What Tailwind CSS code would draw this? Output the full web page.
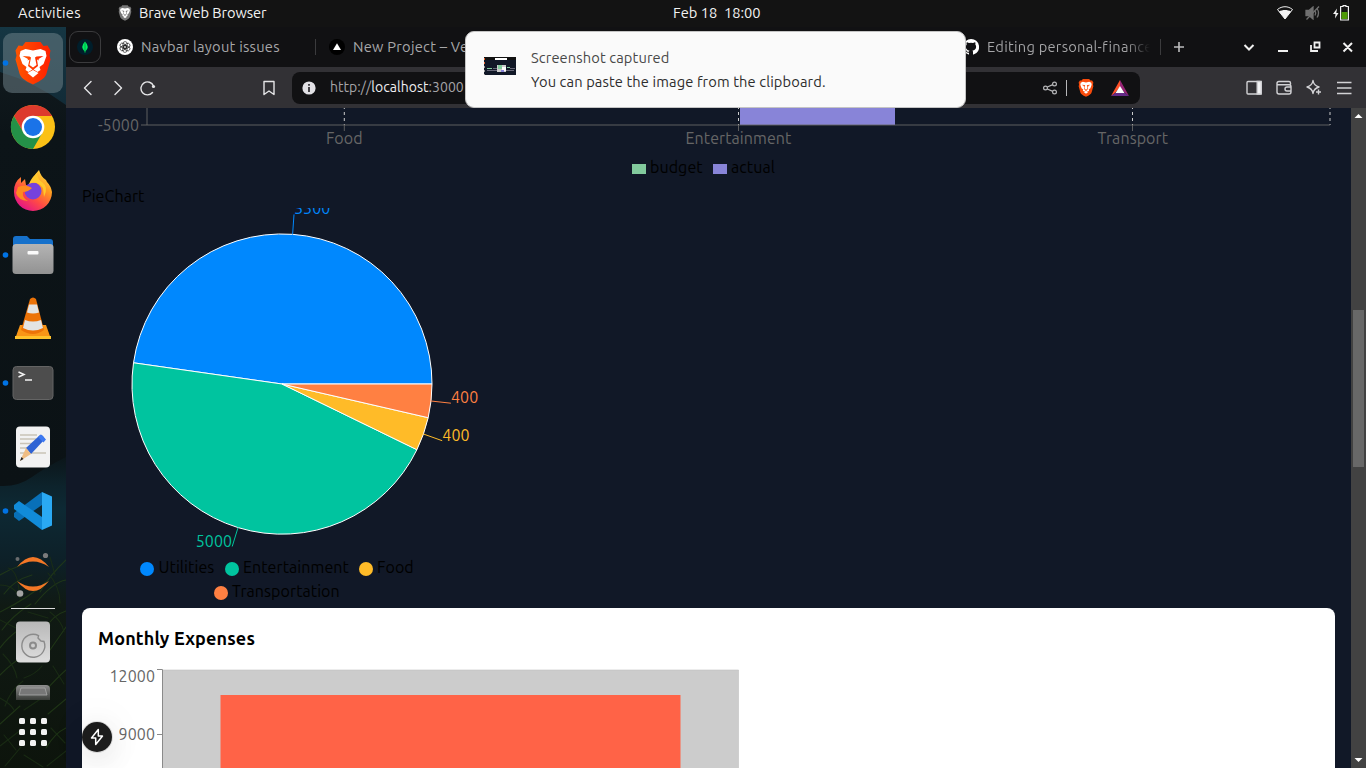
<!DOCTYPE html>
<html lang="en">
<head>
<meta charset="utf-8">
<title>Personal finance</title>
<script src="https://cdn.jsdelivr.net/npm/@tailwindcss/browser@4"></script>
</head>
<body class="relative flex h-[768px] w-[1366px] flex-col overflow-hidden bg-[#111827] font-['Ubuntu','Noto_Sans',sans-serif]">
<svg class="hidden">
  <defs>
    <symbol id="lion" viewBox="0 0 37 44">
      <path d="M11 1h15l3 4 4-.5 3 5-1 5 1 4-4 14c-1 4-5 7-13.500 11C10 39.500 6 36.500 5 32.500L1 18.500l1-4-1-5 3-5L8 5z"/>
      <path fill="#fff" d="M6 10l5-2 7.500 1.500L26 8l5 2 1 5-3 8-4 3 1 3-3 2-4.500-3-4.500 3-3-2 1-3-4-3-3-8z"/>
      <path fill="#fff" d="M18.500 29l5.500 3-5.500 4.500L13 32z"/>
      <path d="M8 15l7 .5 1.500 1L15 24l3.500 2.500L22 24l-1.500-7.500 1.500-1 7-.5-5 3 .5 1.500-2-1L23.500 25l-5 4-5-4L15 18.500l-2 1 .5-1.500z"/>
    </symbol>
  </defs>
</svg>

<header class="relative h-[27px] shrink-0 bg-[#131313] text-[14.670px] leading-[26px] text-[#f2f2f2]">
  <div class="flex h-[26px] items-center pl-[18px]">
    <span class="w-[100px] tracking-[0.27px]">Activities</span>
    <svg class="h-[16px] w-[14px] fill-[#777]" viewBox="0 0 37 44"><use href="#lion"/></svg>
    <span class="ml-[7px] tracking-[-0.1px]">Brave Web Browser</span>
    <span class="ml-auto mr-[17px] flex items-center gap-[12px]">
      <svg width="16" height="14" viewBox="0 0 16 14"><path d="M.5 3.500C5-.2 11-.2 15.500 3.500L8 13z" fill="none" stroke="#f2f2f2"/><path d="M2 5.500c3.500-2 8.500-2 12 0L8 13z" fill="#f2f2f2"/></svg>
      <svg width="16" height="14" viewBox="0 0 16 14" fill="none" stroke="#707070" stroke-width="1.300"><path d="M1 4.500h3l4-3.500v12L4 9.500H1z" fill="#707070"/><path d="M10 4.500q1.500 2.500 0 5M12 2.500q3 4.500 0 9M1.500 13.500L14 .5"/></svg>
      <svg width="16" height="16" viewBox="0 0 16 16"><path d="M7.600 1.500h2.400V.6h3v.9h2.400v13.500H7.600z" fill="none" stroke="#f2f2f2" stroke-width="1.200" stroke-linejoin="round"/><path fill="#4e9a06" d="M8.500 7h6v7h-6z"/><path fill="#f2f2f2" d="M4 3.500L0 9h2.500L2 13.500 5.500 8H3.300z"/></svg>
    </span>
  </div>
  <span class="absolute left-[673px] top-0 whitespace-pre">Feb 18  18:00</span>
</header>

<div class="flex min-h-0 flex-1">
  <aside class="relative w-[66px] shrink-0 overflow-hidden bg-[#0c1318]">
    <svg width="66" height="741" viewBox="0 27 66 741">
      <defs>
        <linearGradient id="wall" x2="0" y2="1"><stop offset="0" stop-color="#153643"/><stop offset=".1" stop-color="#122c38"/><stop offset=".2" stop-color="#0c1418"/><stop offset=".57" stop-color="#0b1215"/><stop offset=".62" stop-color="#0d232c"/><stop offset=".65" stop-color="#0d2934"/><stop offset=".72" stop-color="#0d2028"/><stop offset=".78" stop-color="#101a14"/><stop offset="1" stop-color="#0d140c"/></linearGradient>
        <linearGradient id="hill" x2="0" y2="1"><stop stop-color="#10191d"/><stop offset=".15" stop-color="#0c1418"/><stop offset="1" stop-color="#0b1215"/></linearGradient>
        <linearGradient id="brave" x2="1"><stop stop-color="#ff5500"/><stop offset="1" stop-color="#ff2000"/></linearGradient>
        <linearGradient id="steel" x2="0" y2="1"><stop stop-color="#b4b4b4"/><stop offset="1" stop-color="#929292"/></linearGradient>
        <linearGradient id="disk" x2="0" y2="1"><stop stop-color="#b8b8b8"/><stop offset="1" stop-color="#dedede"/></linearGradient>
        <linearGradient id="fox" x1="1" y1="0" x2=".3" y2="1"><stop stop-color="#fff44f"/><stop offset=".4" stop-color="#ff9a20"/><stop offset=".7" stop-color="#ff4a45"/><stop offset="1" stop-color="#e31587"/></linearGradient>
        <linearGradient id="drive" x2="0" y2="1"><stop stop-color="#8e8e8e"/><stop offset="1" stop-color="#3a3d39"/></linearGradient>
      </defs>
      <path fill="url(#wall)" d="M0 27h66v741H0z"/>
      <path fill="url(#hill)" d="M0 72q35 10 66 33v352q-20 10-34 20T0 486z"/>
      <g fill="none" stroke-width="1.100" stroke-linecap="round">
        <path stroke="#233c18" stroke-opacity=".8" d="M0 575q10-6 22-10M4 594q10-14 28-19M0 612q30-15 46-30M35 604q18-22 31-24M40 592q10-17 26-32M2 630q10-14 29-26M0 648q8-11 20-19M45 629q8-14 21-18M50 650l16-23M0 675q14-14 22-17M46 690q13-14 20-20M0 724l20-18M48 714l18-15M46 748q9-15 20-20"/>
        <path stroke="#1c3015" stroke-opacity=".8" d="M8 568q9 2 11 22M0 585q14 0 20 13M48 573q12 14 12 30M0 620l16 8M50 612q12 9 14 20M3 654q12 12 14 24M53 666l11 18M0 698q11 6 14 12M51 728l14 15M4 735l12 15M24 755l19 12M5 706q5-15 18-25M0 746l22-17M5 766l16-19M47 766l19-15M24 678q12-4 18-12M24 710l18-12M55 575l-5-18M28 612l20 6"/>
      </g>
      <rect x="3" y="33" width="60" height="60" rx="9" fill="#70828a" fill-opacity=".53"/>
      <g fill="#0073e5"><circle cx="5.500" cy="63" r="2.800"/><circle cx="5.500" cy="255" r="2.800"/><circle cx="5.500" cy="383" r="2.800"/><circle cx="5.500" cy="511" r="2.800"/></g>
      <g fill="url(#brave)"><use href="#lion" x="14.500" y="41" width="37" height="44"/></g>

      <circle cx="33" cy="127" r="22" fill="#fbc116"/>
      <path d="M13.900 116A22 22 0 0 1 52.100 116H33L23.500 132.500z" fill="#dd3a2d"/>
      <path d="M13.900 116A22 22 0 0 0 33 149l9.500-16.500h-19z" fill="#249148"/>
      <circle cx="33" cy="127" r="11.300" fill="#fff"/><circle cx="33" cy="127" r="9" fill="#1a73e8"/>

      <path d="M14 191q0-9 7-14v6l4-4 1 6h6q0-8 7-15 2 7 7 10l1 2q4 4 5 10a19 19 0 0 1-38 0z" fill="url(#fox)"/>
      <circle cx="33" cy="191" r="8.500" fill="#7542dc"/>
      <path d="M18 187q8-3 14 1-4 4-9 4-1 6 5 9-10-1-12-8z" fill="#ff8b1e"/><path d="M29 184q8-4 14 4l1 9q5-10-2-15-4-2-5-9-6 5-8 11z" fill="#ffc82d"/>

      <path d="M13 239q0-3 3-3h11l3 3h20q3 0 3 3v10H13z" fill="#1671cb"/>
      <rect x="12.500" y="244" width="41" height="30" rx="3.500" fill="url(#steel)"/><rect x="27.500" y="251" width="11" height="3.500" rx="1" fill="#fafafa"/>

      <path d="M20 325h26l5 14H15z" fill="#f99516"/><path d="M15 336h36v3H15z" fill="#ffc12a"/>
      <path d="M30 299q3-3 6 0l8 31q-11 8-23 0z" fill="#ec7308"/><path d="M29 304.500h8l2 8q-6 2-12 0zM25 320q8 3 16 0l2 8q-10 5-20 0z" fill="#e3e4e4"/>

      <rect x="13" y="366.500" width="40" height="33" rx="3.500" fill="#4d4d4d" stroke="#646464"/><path d="M18.500 372l5.500 2.500-5.500 2.500M25 380h7" fill="none" stroke="#f2f2f2" stroke-width="1.500"/>

      <rect x="16" y="426.500" width="34" height="41" rx="4" fill="#f2f2f2"/>
      <path d="M20 435h17M20 439h16M20 443.500h13M20 448h9M20 453h26" stroke="#c9c3b7" stroke-width="1.600"/>
      <path d="M26 448L40 435q2-1 5 4L31 454z" fill="#2f63d4"/><path d="M38 437l3-2.500 5 5-2.500 3z" fill="#3d79f2"/><path d="M26 448l5 6-11 7z" fill="#efbd84"/><path d="M21.500 457l2 2-3.500 2z" fill="#222"/>

      <path d="M42 492v13L19 521l-5-4v-4z" fill="#0870b8"/><path d="M42 530v-13L19 501l-5 4v4z" fill="#118bd9"/><path d="M42 492l10 4.500v29L42 530z" fill="#2aa9f3"/>

      <path d="M17 567q16-20 32 0-16-11-32 0zM17 581q16 20 32 0-16 11-32 0z" fill="#f37726"/><circle cx="17.500" cy="559" r="2" fill="#6a6c6e"/><circle cx="45.500" cy="555.500" r="2.600" fill="#7a7b7c"/><circle cx="20" cy="593.500" r="3.300" fill="#a5a5a5"/>
      <path d="M11 608.500h44" stroke="#ddd"/>

      <rect x="16" y="621.500" width="34" height="41" rx="4" fill="url(#disk)"/><g fill="none" stroke="#8b8b8b" stroke-width="1.400"><path d="M38.500 635.500a11.500 11.500 0 1 0 5.500 6l-3-.5-3-3z"/><circle cx="33" cy="645.500" r="3" stroke-width="2"/></g>
      <path d="M16 700v-11q0-4 4-4h26q4 0 4 4v11z" fill="url(#drive)"/><path d="M21 688h24l2 7H19z" fill="#777" stroke="#aaa" stroke-width=".8"/>
      <g fill="#f2f2f2"><rect x="19" y="718" width="6" height="6" rx="1.500"/><rect x="30" y="718" width="6" height="6" rx="1.500"/><rect x="41" y="718" width="6" height="6" rx="1.500"/><rect x="19" y="729" width="6" height="6" rx="1.500"/><rect x="30" y="729" width="6" height="6" rx="1.500"/><rect x="41" y="729" width="6" height="6" rx="1.500"/><rect x="19" y="740" width="6" height="6" rx="1.500"/><rect x="30" y="740" width="6" height="6" rx="1.500"/><rect x="41" y="740" width="6" height="6" rx="1.500"/></g>
    </svg>
  </aside>

  <section class="flex w-[1300px] flex-col">
    <nav class="flex h-[40px] shrink-0 items-center bg-[#111113] text-[14.670px] tracking-[0.25px] text-[#a7a7a9]">
      <div class="ml-[3px] flex h-8 w-8 items-center justify-center rounded-[9px] border border-[#3b3b3d]">
        <svg width="16" height="16" viewBox="0 0 16 16"><circle cx="8" cy="8" r="8" fill="#001e2b"/><path d="M8 2.500q5.500 5.500 0 10.500Q2.500 8 8 2.500z" fill="#00ed64"/><path d="M8 3v11" stroke="#009a43" stroke-width=".8"/></svg>
      </div>
      <svg class="ml-[16px]" width="16" height="16" viewBox="0 0 16 16"><circle cx="8" cy="8" r="8" fill="#fff"/><g fill="none" stroke="#222" stroke-width=".7"><rect x="6" y="2.600" width="4.200" height="6.800" rx="2.100"/><rect x="6" y="2.600" width="4.200" height="6.800" rx="2.100" transform="rotate(60 8 8)"/><rect x="6" y="2.600" width="4.200" height="6.800" rx="2.100" transform="rotate(120 8 8)"/><rect x="6" y="2.600" width="4.200" height="6.800" rx="2.100" transform="rotate(180 8 8)"/><rect x="6" y="2.600" width="4.200" height="6.800" rx="2.100" transform="rotate(240 8 8)"/><rect x="6" y="2.600" width="4.200" height="6.800" rx="2.100" transform="rotate(300 8 8)"/></g></svg>
      <span class="ml-[8px] w-[174px] whitespace-nowrap">Navbar layout issues</span>
      <span class="h-4 w-px bg-[#3b3b3d]"></span>
      <svg class="ml-[13px]" width="16" height="16" viewBox="0 0 16 16"><circle cx="8" cy="8" r="8"/><path d="M8 4.300l4 6.700H4z" fill="#fff"/></svg>
      <span class="ml-[8px] w-[610px] whitespace-nowrap">New Project – Vercel</span>
      <svg width="16" height="16" viewBox="0 0 16 16"><path fill="#fff" d="M8 0a8 8 0 0 0-2.500 15.600c.4.100.5-.2.500-.4v-1.500c-2.200.5-2.700-.9-2.700-.9-.4-1-.9-1.200-.9-1.200-.7-.5.100-.5.100-.5.800.100 1.200.8 1.200.8.700 1.200 1.900.9 2.300.7.100-.5.300-.9.500-1.100-1.800-.2-3.600-.9-3.600-4 0-.9.300-1.600.8-2.100-.1-.2-.4-1 .1-2.100 0 0 .7-.2 2.200.8a8 8 0 0 1 4 0c1.500-1 2.200-.8 2.200-.8.400 1.100.2 1.900.1 2.100.5.600.8 1.300.8 2.100 0 3.100-1.900 3.800-3.700 4 .3.200.6.700.6 1.500v2.200c0 .2.100.5.600.4A8 8 0 0 0 8 0"/></svg>
      <span class="ml-[8px] w-[163px] overflow-hidden whitespace-nowrap bg-linear-to-r from-[#a7a7a9] from-85% to-transparent bg-clip-text text-transparent">Editing personal-finance</span>
      <span class="ml-[10px] h-4 w-px bg-[#3b3b3d]"></span>
      <svg class="ml-[13px]" width="191" height="20" viewBox="1174 37 191 20" fill="none" stroke="#f0f0f0" stroke-width="2"><path d="M1174 47h10M1179 42v10" stroke="#bcbcbe" stroke-width="1.600"/><path d="M1244.500 45l4.500 4.500 4.500-4.500M1278 51h10M1343.500 43l8.500 8.500M1352 43l-8.500 8.500"/><path d="M1311 45v6h7M1314.500 42.500h5v5h-5z" stroke-width="1.800"/></svg>
    </nav>

    <div class="flex h-[41px] shrink-0 items-center bg-[#323135]">
      <svg class="ml-[16px]" width="196" height="20" viewBox="82 77 196 20" fill="none" stroke="#e5e5e7" stroke-width="1.400" stroke-linecap="round" stroke-linejoin="round"><path d="M91 80.500L84.500 87l6.500 6.500M115 80.500l6.500 6.500-6.500 6.500M152.500 91.500a6.500 6.500 0 1 1 1-6.500M264 80.500h10v13l-5-3.500-5 3.500z"/><circle cx="153.500" cy="85.500" r="1.600" fill="#e5e5e7" stroke="none"/></svg>
      <div class="ml-[14px] flex h-8 w-[848px] items-center rounded-[8px] bg-[#111113] pl-[10px] pr-[11px] text-[14px]">
        <svg width="14" height="14" viewBox="0 0 14 14"><circle cx="7" cy="7" r="6.600" fill="#e2e1e5"/><path d="M7 3v1.700M7 6v5" stroke="#333236" stroke-width="1.800"/></svg>
        <span class="ml-[14px] tracking-[0.040px] text-[#a5a4a8]">http://<span class="text-[#eeeef0]">localhost</span>:3000</span>
        <svg class="ml-auto" width="87" height="20" viewBox="1042 77 87 20"><g fill="none" stroke="#b7b7b9" stroke-width="1.200"><circle cx="1045.500" cy="87" r="1.900"/><circle cx="1054.500" cy="83" r="1.900"/><circle cx="1054.500" cy="91" r="1.900"/><path d="M1047.300 86l5.500-2.400M1047.300 88l5.500 2.400"/></g><path d="M1066.500 79v16" stroke="#b7b7b9"/><g fill="#f94b0b"><use href="#lion" x="1078" y="77.500" width="16" height="18.500"/></g><path fill="#ff5129" d="M1120 79l-9 16 4-3 5-6z"/><path fill="#972476" d="M1120 79l9 16-4-3-5-6z"/><path fill="#642a87" d="M1111 95h18l-4-3h-10z"/><path fill="#fff" d="M1120 85l4.500 7h-9z"/></svg>
      </div>
      <svg class="ml-[105px]" width="108" height="20" viewBox="1245 77.500 108 20" fill="none" stroke="#d2d2d5" stroke-width="1.400"><rect x="1247" y="81" width="14" height="12.500" rx="1"/><path d="M1257.200 81h4v12.500h-4z" fill="#f3f3f5"/><path d="M1290.500 84v-1.500q0-1.500-1.500-1.500h-10q-2 0-2 2v8.500q0 2 2 2h10q2 0 2-2V86q0-1.800-2-1.800h-12M1291 86.500h-4a2 2 0 0 0 0 4h4" /><path d="M1313 80q.7 5 6 6.500-5.300 1.500-6 6.500-.7-5-6-6.500 5.300-1.500 6-6.500z" stroke-linejoin="round"/><path d="M1318.500 89v5M1316 91.500h5M1337 82h14.500M1337 87.500h14.500M1337 93h14.500"/></svg>
    </div>

    <div class="flex h-[660px] overflow-hidden">
      <main class="w-[1285px] bg-[#111827] px-4 text-base tracking-[0.080px]">
        <!-- Budget against actual -->
        <svg class="block" width="1253" height="76" viewBox="82 108 1253 76">
          <path d="M740 108H895v17H740z" fill="#8884d8"/>
          <path d="M344.300 108v17M738.500 108v17M1132.500 108v17M1330 108v17" stroke="#ccc" stroke-dasharray="3" stroke-dashoffset="2"/>
          <path d="M141 125h1189M147 108v17M344.300 125v6M738.500 125v6M1132.500 125v6" stroke="#666" stroke-opacity=".9" fill="none"/>
          <g fill="#666"><text x="139" y="130.500" text-anchor="end">-5000</text><text x="344.300" y="144" text-anchor="middle">Food</text><text x="738.500" y="144" text-anchor="middle">Entertainment</text><text x="1132.800" y="144" text-anchor="middle">Transport</text></g>
          <path d="M632 164h14v10h-14z" fill="#82ca9d"/><path d="M713 164h14v10h-14z" fill="#8884d8"/>
          <text x="650" y="173">budget</text><text x="731" y="173">actual</text>
        </svg>
        <h2 class="h-6 leading-6">PieChart</h2>
        <!-- Spending by category -->
        <svg class="block" width="400" height="400" viewBox="82 208 400 400">
          <g stroke="#fff" stroke-linejoin="round">
            <path fill="#0088fe" d="M282 384h150A150 150 0 0 0 133.500 362.800z"/>
            <path fill="#00c49f" d="M282 384L133.500 362.800A150 150 0 0 0 416.900 449.700z"/>
            <path fill="#ffbb28" d="M282 384L416.900 449.700A150 150 0 0 0 428.200 417.700z"/>
            <path fill="#ff8042" d="M282 384L428.200 417.700A150 150 0 0 0 432 384z"/>
          </g>
          <path d="M292.600 234.400L294 214.400" stroke="#0088fe"/><path d="M238.100 527.400L232.200 546.500" stroke="#00c49f"/><path d="M423.400 434l18.800 6.700" stroke="#ffbb28"/><path d="M431 401l19.900 2.200" stroke="#ff8042"/>
          <text x="294" y="214" fill="#0088fe">5300</text><text x="232.200" y="546.500" text-anchor="end" fill="#00c49f">5000</text><text x="442.300" y="440.700" fill="#ffbb28">400</text><text x="451" y="403" fill="#ff8042">400</text>
          <circle cx="147" cy="569" r="7" fill="#0088fe"/><circle cx="232" cy="569" r="7" fill="#00c49f"/><circle cx="366" cy="569" r="7" fill="#ffbb28"/><circle cx="221" cy="593" r="7" fill="#ff8042"/>
          <text x="158.500" y="573">Utilities</text><text x="243" y="573">Entertainment</text><text x="377" y="573">Food</text><text x="232" y="597">Transportation</text>
        </svg>
        <div class="h-[300px] rounded-lg bg-white px-4 pt-4">
          <h2 class="h-7 text-lg font-bold leading-7 tracking-[0.150px]">Monthly Expenses</h2>
          <svg class="block" width="700" height="116" viewBox="98 652 700 116">
            <path d="M163 670h575.500v98H163z" fill="#ccc"/><path d="M163 670h575.500v98" fill="none" stroke="#c0c0c0" stroke-width=".6"/><path d="M220.500 695h460v73h-460z" fill="#ff6347"/>
            <path d="M157 669.500h5.500V768M157 734.500h5.500" fill="none" stroke="#8a8a8a"/>
            <g fill="#666"><text x="155" y="682" text-anchor="end">12000</text><text x="155" y="740" text-anchor="end">9000</text></g>
          </svg>
        </div>
      </main>
      <div class="relative flex w-[15px] flex-col items-center justify-between bg-[#424242]">
        <svg width="15" height="15"><path d="M3.500 10h8L7.500 6z" fill="#fff"/></svg>
        <div class="absolute top-[202px] h-[157px] w-[11px] bg-[#686868]"></div>
        <svg width="15" height="15"><path d="M3.500 5h8L7.500 9z" fill="#fff"/></svg>
      </div>
    </div>
  </section>
</div>

<div class="absolute left-[82px] top-[722px] flex h-[30px] w-[30px] items-center justify-center rounded-full bg-[#1c1c1c] shadow-[0_0_0_1px_#1718181f,0_10px_30px_-4px_#00000028,0_0_40px_#00000014]">
  <svg width="16" height="18" viewBox="0 0 16 18" fill="none" stroke="#fff" stroke-width="1.500" stroke-linejoin="round"><path d="M9.300 1.500L2.500 10h4.200v6.500L13.500 8H9.300z"/></svg>
</div>

<div class="absolute left-[465px] top-[31px] flex h-[77px] w-[501px] rounded-[9px] border border-[#c4c4c4] bg-[#fafafa] pl-[18px] pt-[14px] text-[14.670px] text-[#2d2d2d]">
  <svg class="mt-[11px]" width="32" height="18"><path fill="#111827" d="M0 0h32v18H0z"/><path fill="#111" d="M0 0h32v3H0z"/><path fill="#fff" d="M11 1h12v2H11z"/><path fill="#ccc" d="M13 8h9v7h-9z"/><path fill="#fff" d="M18 10h4v4h-4z"/><path fill="#82ca9d" d="M3 11h5v1H3zM14 8h4v4h-4zM23 10h3v1h-3z"/><path fill="#8884d8" d="M17 13h3v2h-3z"/><path stroke="#667" d="M3 13.500h10M22 13.500h8M9 11.500h4M26 11.500h5"/><path stroke="#e66534" stroke-dasharray="2" d="M.5 1v7"/><path stroke="#999" stroke-dasharray="2" d="M.5 9v9"/></svg>
  <div class="ml-[15px] leading-6 tracking-[0.120px]">
    <p class="text-[#484848]">Screenshot captured</p>
    <p>You can paste the image from the clipboard.</p>
  </div>
</div>
</body>
</html>
